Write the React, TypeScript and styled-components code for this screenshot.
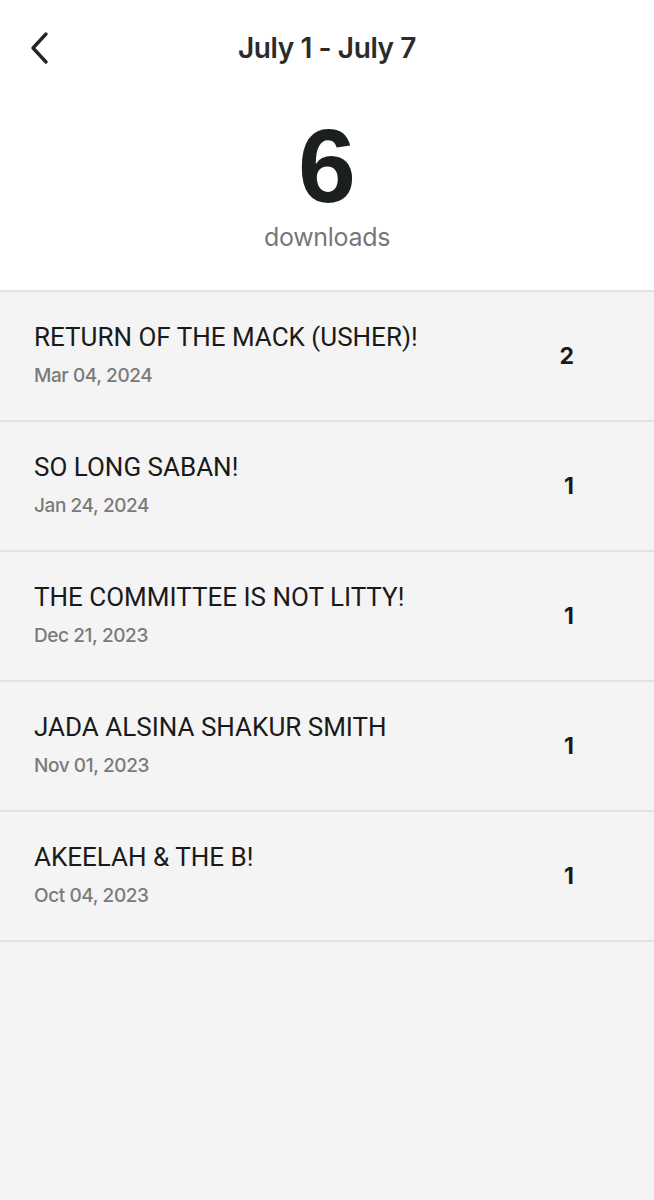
import React from "react";
import styled, { createGlobalStyle } from "styled-components";

const Global = createGlobalStyle`
  html, body { margin: 0; padding: 0; background: #f4f4f4; }
  body { font-family: Inter, "Noto Sans", sans-serif; }
`;

const Page = styled.div`
  width: 654px;
  min-height: 1200px;
  background: #f4f4f4;
`;

const Header = styled.header`
  background: #ffffff;
  height: 292px;
  box-sizing: border-box;
  border-bottom: 2px solid #e3e3e3;
  display: flex;
  flex-direction: column;
  align-items: center;
`;

const TopBar = styled.div`
  position: relative;
  width: 100%;
  height: 96px;
  display: flex;
  align-items: center;
  justify-content: center;
`;

const Back = styled.button`
  position: absolute;
  left: 22px;
  top: 30px;
  width: 34px;
  height: 36px;
  padding: 0;
  border: none;
  background: none;
  display: flex;
  align-items: center;
  justify-content: center;
`;

const Title = styled.h1`
  margin: 0;
  font-family: Inter, sans-serif;
  font-weight: 600;
  font-size: 28px;
  color: #2b2b2b;
  letter-spacing: -0.4px;
`;

const Total = styled.div`
  margin-top: 18px;
  font-family: "Liberation Sans", Arial, sans-serif;
  font-weight: 700;
  font-size: 104px;
  line-height: 104px;
  color: #1b1f1e;
`;

const Unit = styled.div`
  margin-top: 4px;
  font-family: Inter, sans-serif;
  font-size: 25px;
  color: #777777;
  letter-spacing: -0.3px;
`;

const List = styled.ul`
  list-style: none;
  margin: 0;
  padding: 0;
`;

const Row = styled.li`
  height: 130px;
  box-sizing: border-box;
  border-bottom: 2px solid #e3e3e3;
  display: flex;
  align-items: center;
  padding: 0 80px 0 34px;
`;

const Info = styled.div`
  flex: 1;
  display: flex;
  flex-direction: column;
  gap: 12px;
  margin-top: -4px;
`;

const Name = styled.div`
  font-family: Roboto, sans-serif;
  font-size: 26px;
  color: #1a1a1a;
`;

const DateText = styled.div`
  font-family: Inter, sans-serif;
  font-weight: 500;
  font-size: 19px;
  color: #7a7a7a;
  letter-spacing: -0.4px;
`;

const Count = styled.div`
  font-family: Inter, sans-serif;
  font-weight: 700;
  font-size: 23px;
  color: #1a1a1a;
`;

const items = [
  { name: "RETURN OF THE MACK (USHER)!", date: "Mar 04, 2024", count: 2 },
  { name: "SO LONG SABAN!", date: "Jan 24, 2024", count: 1 },
  { name: "THE COMMITTEE IS NOT LITTY!", date: "Dec 21, 2023", count: 1 },
  { name: "JADA ALSINA SHAKUR SMITH", date: "Nov 01, 2023", count: 1 },
  { name: "AKEELAH & THE B!", date: "Oct 04, 2023", count: 1 },
];

export default function App() {
  return (
    <Page>
      <Global />
      <Header>
        <TopBar>
          <Back aria-label="Back">
            <svg width="22" height="34" viewBox="0 0 22 34" fill="none">
              <path d="M18 3 L5 17 L18 31" stroke="#262626" strokeWidth="3.4" strokeLinecap="round" strokeLinejoin="round" />
            </svg>
          </Back>
          <Title>July 1 - July 7</Title>
        </TopBar>
        <Total>6</Total>
        <Unit>downloads</Unit>
      </Header>
      <List>
        {items.map((it) => (
          <Row key={it.name}>
            <Info>
              <Name>{it.name}</Name>
              <DateText>{it.date}</DateText>
            </Info>
            <Count>{it.count}</Count>
          </Row>
        ))}
      </List>
    </Page>
  );
}
